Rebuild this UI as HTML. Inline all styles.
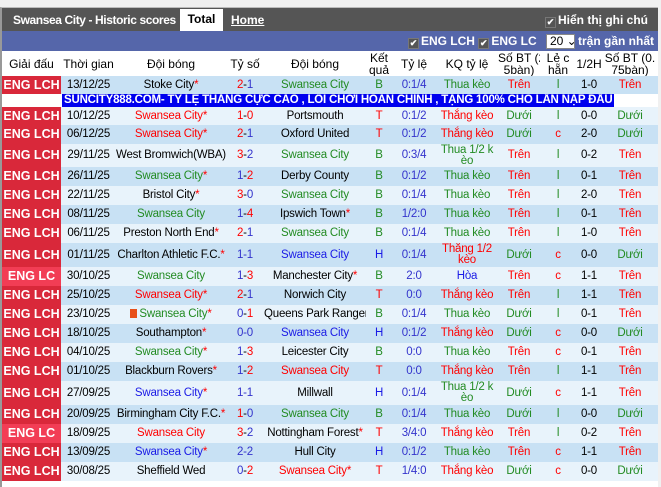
<!DOCTYPE html>
<html><head><meta charset="utf-8"><style>
*{margin:0;padding:0;box-sizing:border-box}
body{width:661px;height:480px;overflow:hidden;background:#f0f0f0;font-family:"Liberation Sans",Arial,sans-serif;font-size:12px;position:relative}
#wrap{position:absolute;left:0;top:7px;width:658px;height:480px;background:#fff;border-left:2px solid #999;border-top:1px solid #bbb}
#title{height:23px;background:#555;position:relative;color:#fff;font-weight:bold;font-size:12px}
#title .t{position:absolute;left:11px;top:5px;letter-spacing:-0.4px}
#title .tab{position:absolute;left:178px;top:1px;width:43px;height:22px;background:#fff;color:#000;text-align:center;line-height:21px}
#title .home{position:absolute;left:229px;top:5px;text-decoration:underline}
#title .note{position:absolute;right:10px;top:5px}
.cb{display:inline-block;width:11px;height:11px;background:#555;border:1px solid #777;color:#fff;font-size:9px;line-height:9px;text-align:center;vertical-align:-1px;margin-right:2px}
#bar{height:20px;background:#5566aa;position:relative;color:#fff;font-weight:bold;font-size:12px}
#bar .rr{position:absolute;right:4px;top:3px;white-space:nowrap}
.sel{display:inline-block;background:#fff;color:#000;font-weight:normal;width:29px;height:15px;border:1px solid #888;font-size:12px;line-height:13px;padding-left:3px;margin:0 3px 0 6px}
table{border-collapse:collapse;table-layout:fixed;width:656px}
td{text-align:center;padding:0;line-height:11px;overflow:hidden;white-space:nowrap;font-size:11.5px;letter-spacing:-0.2px}
th{font-weight:normal;font-size:12px;line-height:12px;height:25px;background:#fff;color:#000;white-space:nowrap;overflow:hidden}
tr.a td{background:#e8f3fb}
tr.b td{background:#c8e1f4}
td.lg{background:#d9283a!important;color:#fff;font-weight:bold;font-size:12.5px;letter-spacing:0}
td.lc{background:#f23d55!important;color:#fff;font-weight:bold;font-size:12.5px;letter-spacing:0}
.r{color:#f00}.g{color:#228b22}.bl{color:#1a1ae6}.s{color:#f00}
.n{color:#3333cc}
tr.ad td{background:#fff;height:13px;text-align:left}
.adt{background:#0000ee;color:#fff;font-weight:bold;font-size:11.5px;line-height:13px;padding:0 2px;margin-left:60px;display:inline-block;letter-spacing:-0.2px}
</style></head><body>
<div id="wrap">
<div id="title"><span class="t">Swansea City - Historic scores</span><span class="tab">Total</span><span class="home">Home</span><span class="note"><span class="cb">✔</span>Hiển thị ghi chú</span></div>
<div id="bar"><span class="rr"><span class="cb">✔</span>ENG LCH <span class="cb">✔</span>ENG LC <span class="sel">20 ⌄</span>trận gần nhất</span></div>
<table>
<colgroup><col style="width:59px"><col style="width:55px"><col style="width:110px"><col style="width:38px"><col style="width:102px"><col style="width:26px"><col style="width:44px"><col style="width:62px"><col style="width:42px"><col style="width:36px"><col style="width:26px"><col style="width:56px"></colgroup>
<tr><th>Giải đấu</th><th>Thời gian</th><th>Đội bóng</th><th>Tỷ số</th><th>Đội bóng</th><th>Kết<br>quả</th><th>Tỷ lệ</th><th>KQ tỷ lệ</th><th>Số BT (2.<br>5bàn)</th><th>Lẻ c<br>hẵn</th><th>1/2H</th><th>Số BT (0.<br>75bàn)</th></tr>
<tr class="b" style="height:18px"><td class="lg">ENG LCH</td><td>13/12/25</td><td>Stoke City<span class="s">*</span></td><td><span class="r">2</span>-<span class="n">1</span></td><td class="g">Swansea City</td><td class="g">B</td><td class="n">0:1/4</td><td class="g">Thua kèo</td><td class="r">Trên</td><td class="g">l</td><td>1-0</td><td class="r">Trên</td></tr>
<tr class="ad"><td colspan="12"><span class="adt">SUNCITY888.COM- TỶ LỆ THẮNG CỰC CAO , LỐI CHƠI HOÀN CHỈNH , TẶNG 100% CHO LẦN NẠP ĐẦU</span></td></tr>
<tr class="a" style="height:18px"><td class="lg">ENG LCH</td><td>10/12/25</td><td class="r">Swansea City*</td><td><span class="r">1</span>-<span class="r">0</span></td><td>Portsmouth</td><td class="r">T</td><td class="n">0:1/2</td><td class="r">Thắng kèo</td><td class="g">Dưới</td><td class="g">l</td><td>0-0</td><td class="g">Dưới</td></tr>
<tr class="b" style="height:19px"><td class="lg">ENG LCH</td><td>06/12/25</td><td class="r">Swansea City*</td><td><span class="r">2</span>-<span class="n">1</span></td><td>Oxford United</td><td class="r">T</td><td class="n">0:1/2</td><td class="r">Thắng kèo</td><td class="g">Dưới</td><td class="r">c</td><td>2-0</td><td class="g">Dưới</td></tr>
<tr class="a" style="height:23px"><td class="lg">ENG LCH</td><td>29/11/25</td><td>West Bromwich(WBA)<span class="s">*</span></td><td><span class="r">3</span>-<span class="n">2</span></td><td class="g">Swansea City</td><td class="g">B</td><td class="n">0:3/4</td><td class="g">Thua 1/2 k<br>èo</td><td class="r">Trên</td><td class="g">l</td><td>0-2</td><td class="r">Trên</td></tr>
<tr class="b" style="height:19px"><td class="lg">ENG LCH</td><td>26/11/25</td><td class="g">Swansea City<span class="s">*</span></td><td><span class="n">1</span>-<span class="r">2</span></td><td>Derby County</td><td class="g">B</td><td class="n">0:1/2</td><td class="g">Thua kèo</td><td class="r">Trên</td><td class="g">l</td><td>0-1</td><td class="r">Trên</td></tr>
<tr class="a" style="height:19px"><td class="lg">ENG LCH</td><td>22/11/25</td><td>Bristol City<span class="s">*</span></td><td><span class="r">3</span>-<span class="n">0</span></td><td class="g">Swansea City</td><td class="g">B</td><td class="n">0:1/4</td><td class="g">Thua kèo</td><td class="r">Trên</td><td class="g">l</td><td>2-0</td><td class="r">Trên</td></tr>
<tr class="b" style="height:19px"><td class="lg">ENG LCH</td><td>08/11/25</td><td class="g">Swansea City</td><td><span class="n">1</span>-<span class="r">4</span></td><td>Ipswich Town<span class="s">*</span></td><td class="g">B</td><td class="n">1/2:0</td><td class="g">Thua kèo</td><td class="r">Trên</td><td class="g">l</td><td>0-1</td><td class="r">Trên</td></tr>
<tr class="a" style="height:19px"><td class="lg">ENG LCH</td><td>06/11/25</td><td>Preston North End<span class="s">*</span></td><td><span class="r">2</span>-<span class="n">1</span></td><td class="g">Swansea City</td><td class="g">B</td><td class="n">0:1/4</td><td class="g">Thua kèo</td><td class="r">Trên</td><td class="g">l</td><td>1-0</td><td class="r">Trên</td></tr>
<tr class="b" style="height:24px"><td class="lg">ENG LCH</td><td>01/11/25</td><td>Charlton Athletic F.C.<span class="s">*</span></td><td><span class="n">1-1</span></td><td class="bl">Swansea City</td><td class="bl">H</td><td class="n">0:1/4</td><td class="r">Thắng 1/2<br>kèo</td><td class="g">Dưới</td><td class="r">c</td><td>0-0</td><td class="g">Dưới</td></tr>
<tr class="a" style="height:19px"><td class="lc">ENG LC</td><td>30/10/25</td><td class="g">Swansea City</td><td><span class="n">1</span>-<span class="r">3</span></td><td>Manchester City<span class="s">*</span></td><td class="g">B</td><td class="n">2:0</td><td class="bl">Hòa</td><td class="r">Trên</td><td class="r">c</td><td>1-1</td><td class="r">Trên</td></tr>
<tr class="b" style="height:19px"><td class="lg">ENG LCH</td><td>25/10/25</td><td class="r">Swansea City*</td><td><span class="r">2</span>-<span class="n">1</span></td><td>Norwich City</td><td class="r">T</td><td class="n">0:0</td><td class="r">Thắng kèo</td><td class="r">Trên</td><td class="g">l</td><td>1-1</td><td class="r">Trên</td></tr>
<tr class="a" style="height:19px"><td class="lg">ENG LCH</td><td>23/10/25</td><td class="g"><span style="display:inline-block;width:7px;height:9px;background:#e8501a;vertical-align:-1px;margin-right:2px"></span>Swansea City<span class="s">*</span></td><td><span class="n">0</span>-<span class="r">1</span></td><td>Queens Park Rangers</td><td class="g">B</td><td class="n">0:1/4</td><td class="g">Thua kèo</td><td class="g">Dưới</td><td class="g">l</td><td>0-1</td><td class="r">Trên</td></tr>
<tr class="b" style="height:19px"><td class="lg">ENG LCH</td><td>18/10/25</td><td>Southampton<span class="s">*</span></td><td class="n">0-0</td><td class="bl">Swansea City</td><td class="bl">H</td><td class="n">0:1/2</td><td class="r">Thắng kèo</td><td class="g">Dưới</td><td class="r">c</td><td>0-0</td><td class="g">Dưới</td></tr>
<tr class="a" style="height:19px"><td class="lg">ENG LCH</td><td>04/10/25</td><td class="g">Swansea City<span class="s">*</span></td><td><span class="n">1</span>-<span class="r">3</span></td><td>Leicester City</td><td class="g">B</td><td class="n">0:0</td><td class="g">Thua kèo</td><td class="r">Trên</td><td class="r">c</td><td>0-1</td><td class="r">Trên</td></tr>
<tr class="b" style="height:19px"><td class="lg">ENG LCH</td><td>01/10/25</td><td>Blackburn Rovers<span class="s">*</span></td><td><span class="n">1</span>-<span class="r">2</span></td><td class="r">Swansea City</td><td class="r">T</td><td class="n">0:0</td><td class="r">Thắng kèo</td><td class="r">Trên</td><td class="g">l</td><td>1-1</td><td class="r">Trên</td></tr>
<tr class="a" style="height:24px"><td class="lg">ENG LCH</td><td>27/09/25</td><td class="bl">Swansea City<span class="s">*</span></td><td class="n">1-1</td><td>Millwall</td><td class="bl">H</td><td class="n">0:1/4</td><td class="g">Thua 1/2 k<br>èo</td><td class="g">Dưới</td><td class="r">c</td><td>1-1</td><td class="r">Trên</td></tr>
<tr class="b" style="height:19px"><td class="lg">ENG LCH</td><td>20/09/25</td><td>Birmingham City F.C.<span class="s">*</span></td><td><span class="r">1</span>-<span class="n">0</span></td><td class="g">Swansea City</td><td class="g">B</td><td class="n">0:1/4</td><td class="g">Thua kèo</td><td class="g">Dưới</td><td class="g">l</td><td>0-0</td><td class="g">Dưới</td></tr>
<tr class="a" style="height:19px"><td class="lc">ENG LC</td><td>18/09/25</td><td class="r">Swansea City</td><td><span class="r">3</span>-<span class="n">2</span></td><td>Nottingham Forest<span class="s">*</span></td><td class="r">T</td><td class="n">3/4:0</td><td class="r">Thắng kèo</td><td class="r">Trên</td><td class="g">l</td><td>0-2</td><td class="r">Trên</td></tr>
<tr class="b" style="height:19px"><td class="lg">ENG LCH</td><td>13/09/25</td><td class="bl">Swansea City<span class="s">*</span></td><td class="n">2-2</td><td>Hull City</td><td class="bl">H</td><td class="n">0:1/2</td><td class="g">Thua kèo</td><td class="r">Trên</td><td class="r">c</td><td>1-1</td><td class="r">Trên</td></tr>
<tr class="a" style="height:19px"><td class="lg">ENG LCH</td><td>30/08/25</td><td>Sheffield Wed</td><td><span class="n">0</span>-<span class="r">2</span></td><td class="r">Swansea City*</td><td class="r">T</td><td class="n">1/4:0</td><td class="r">Thắng kèo</td><td class="g">Dưới</td><td class="r">c</td><td>0-0</td><td class="g">Dưới</td></tr>
</table>
</div>
</body></html>
